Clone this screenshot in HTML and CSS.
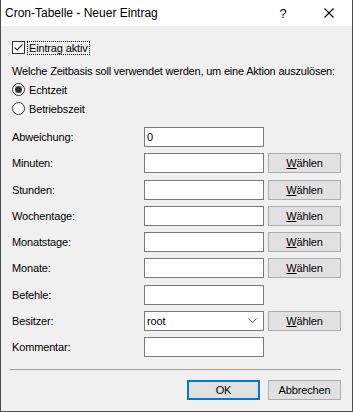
FILE: index.html
```html
<!DOCTYPE html>
<html lang="de">
<head>
  <meta charset="UTF-8">
  <title>Cron-Tabelle - Neuer Eintrag</title>
  <link rel="stylesheet" href="styles.css">
</head>
<body>

<div class="dialog">
  <!-- Title bar -->
  <div class="titlebar">
    <span class="title">Cron-Tabelle - Neuer Eintrag</span>
    <span class="caption-btn help">?</span>
    <span class="caption-btn close">
      <svg width="10" height="10" viewBox="0 0 10 10">
        <path d="M0.5 0.5 L9.5 9.5 M9.5 0.5 L0.5 9.5" stroke="#000" stroke-width="1.1" fill="none"/>
      </svg>
    </span>
  </div>

  <div class="content">
    <label class="check">
      <span class="box">
        <svg width="11" height="11" viewBox="0 0 11 11">
          <path d="M1.5 5.5 L4 8 L9.5 2.5" stroke="#333" stroke-width="1.2" fill="none"/>
        </svg>
      </span>
      <span class="focus">Eintrag aktiv</span>
    </label>

    <p class="question">Welche Zeitbasis soll verwendet werden, um eine Aktion auszulösen:</p>

    <label class="radio first"><span class="circle on"></span>Echtzeit</label>
    <label class="radio"><span class="circle"></span>Betriebszeit</label>

    <div class="form">
      <span class="lbl">Abweichung:</span>
      <span class="field">0</span>
      <span></span>

      <span class="lbl">Minuten:</span>
      <span class="field"></span>
      <span class="btn"><u>W</u>ählen</span>

      <span class="lbl">Stunden:</span>
      <span class="field"></span>
      <span class="btn"><u>W</u>ählen</span>

      <span class="lbl">Wochentage:</span>
      <span class="field"></span>
      <span class="btn"><u>W</u>ählen</span>

      <span class="lbl">Monatstage:</span>
      <span class="field"></span>
      <span class="btn"><u>W</u>ählen</span>

      <span class="lbl">Monate:</span>
      <span class="field"></span>
      <span class="btn"><u>W</u>ählen</span>

      <span class="lbl">Befehle:</span>
      <span class="field"></span>
      <span></span>

      <span class="lbl">Besitzer:</span>
      <span class="field combo">root
        <svg class="chevron" width="9" height="5" viewBox="0 0 9 5">
          <path d="M0.5 0.5 L4.5 4.5 L8.5 0.5" stroke="#555" stroke-width="1" fill="none"/>
        </svg>
      </span>
      <span class="btn"><u>W</u>ählen</span>

      <span class="lbl">Kommentar:</span>
      <span class="field"></span>
      <span></span>
    </div>
  </div>

  <div class="separator"></div>

  <div class="actions">
    <span class="btn wide default">OK</span>
    <span class="btn wide">Abbrechen</span>
  </div>
</div>

</body>
</html>
```

FILE: styles.css
```css
body {
  margin: 0;
  padding: 0;
  font-family: 'Liberation Sans', Arial, sans-serif;
  font-size: 11px;
  letter-spacing: -0.15px;
  color: #000;
}

.dialog {
  width: 353px;
  height: 412px;
  box-sizing: border-box;
  border: 1px solid #4b4b4b;
  border-top: none;
  background: #f0f0f0;
  display: flex;
  flex-direction: column;
}

/* Title bar */
.titlebar {
  height: 26px;
  background: #fff;
  display: flex;
  align-items: center;
  padding-left: 4px;
  font-size: 12px;
  letter-spacing: 0;
}

.title {
  flex: 1;
}

.caption-btn {
  width: 46px;
  height: 26px;
  display: flex;
  justify-content: center;
  align-items: center;
}

.help {
  font-size: 13px;
}

/* Content */
.content {
  padding: 0 11px 0 10px;
}

.check {
  display: flex;
  align-items: center;
  margin-top: 15px;
  height: 13px;
}

.box {
  width: 13px;
  height: 13px;
  box-sizing: border-box;
  border: 1px solid #333;
  background: #fff;
  margin-left: 1px;
  display: flex;
  justify-content: center;
  align-items: center;
}

.focus {
  margin-left: 3px;
  padding: 0 1px;
  line-height: 12px;
  outline: 1px dotted #000;
}

.question {
  margin: 11px 0 0 1px;
  line-height: 13px;
  white-space: nowrap;
  letter-spacing: -0.2px;
}

.radio {
  display: flex;
  align-items: center;
  height: 13px;
  margin-top: 6px;
}

.radio.first {
  margin-top: 5px;
}

.circle {
  width: 13px;
  height: 13px;
  box-sizing: border-box;
  border: 1px solid #333;
  border-radius: 50%;
  background: #fff;
  margin: 0 4px 0 1px;
  display: flex;
  justify-content: center;
  align-items: center;
}

.circle.on::after {
  content: "";
  width: 7px;
  height: 7px;
  border-radius: 50%;
  background: #333;
}

/* Form rows */
.form {
  display: grid;
  grid-template-columns: 129px 120px 73px;
  grid-auto-rows: 20px;
  column-gap: 4px;
  row-gap: 6.25px;
  margin-top: 12px;
  align-items: center;
}

.lbl {
  padding-left: 1px;
}

.field {
  height: 20px;
  box-sizing: border-box;
  border: 1px solid #7a7a7a;
  background: #fff;
  padding-left: 2px;
  display: flex;
  align-items: center;
}

.combo {
  justify-content: space-between;
  padding-right: 6px;
}

.btn {
  height: 20px;
  box-sizing: border-box;
  border: 1px solid #adadad;
  background: #e1e1e1;
  display: flex;
  justify-content: center;
  align-items: center;
}

.separator {
  height: 1px;
  background: #a0a0a0;
  margin: 12px 11px 0 9px;
}

.actions {
  display: flex;
  justify-content: flex-end;
  gap: 8px;
  padding: 10px 11px 0 0;
}

.btn.wide {
  width: 73px;
}

.btn.default {
  border: 2px solid #0078d7;
}
```
